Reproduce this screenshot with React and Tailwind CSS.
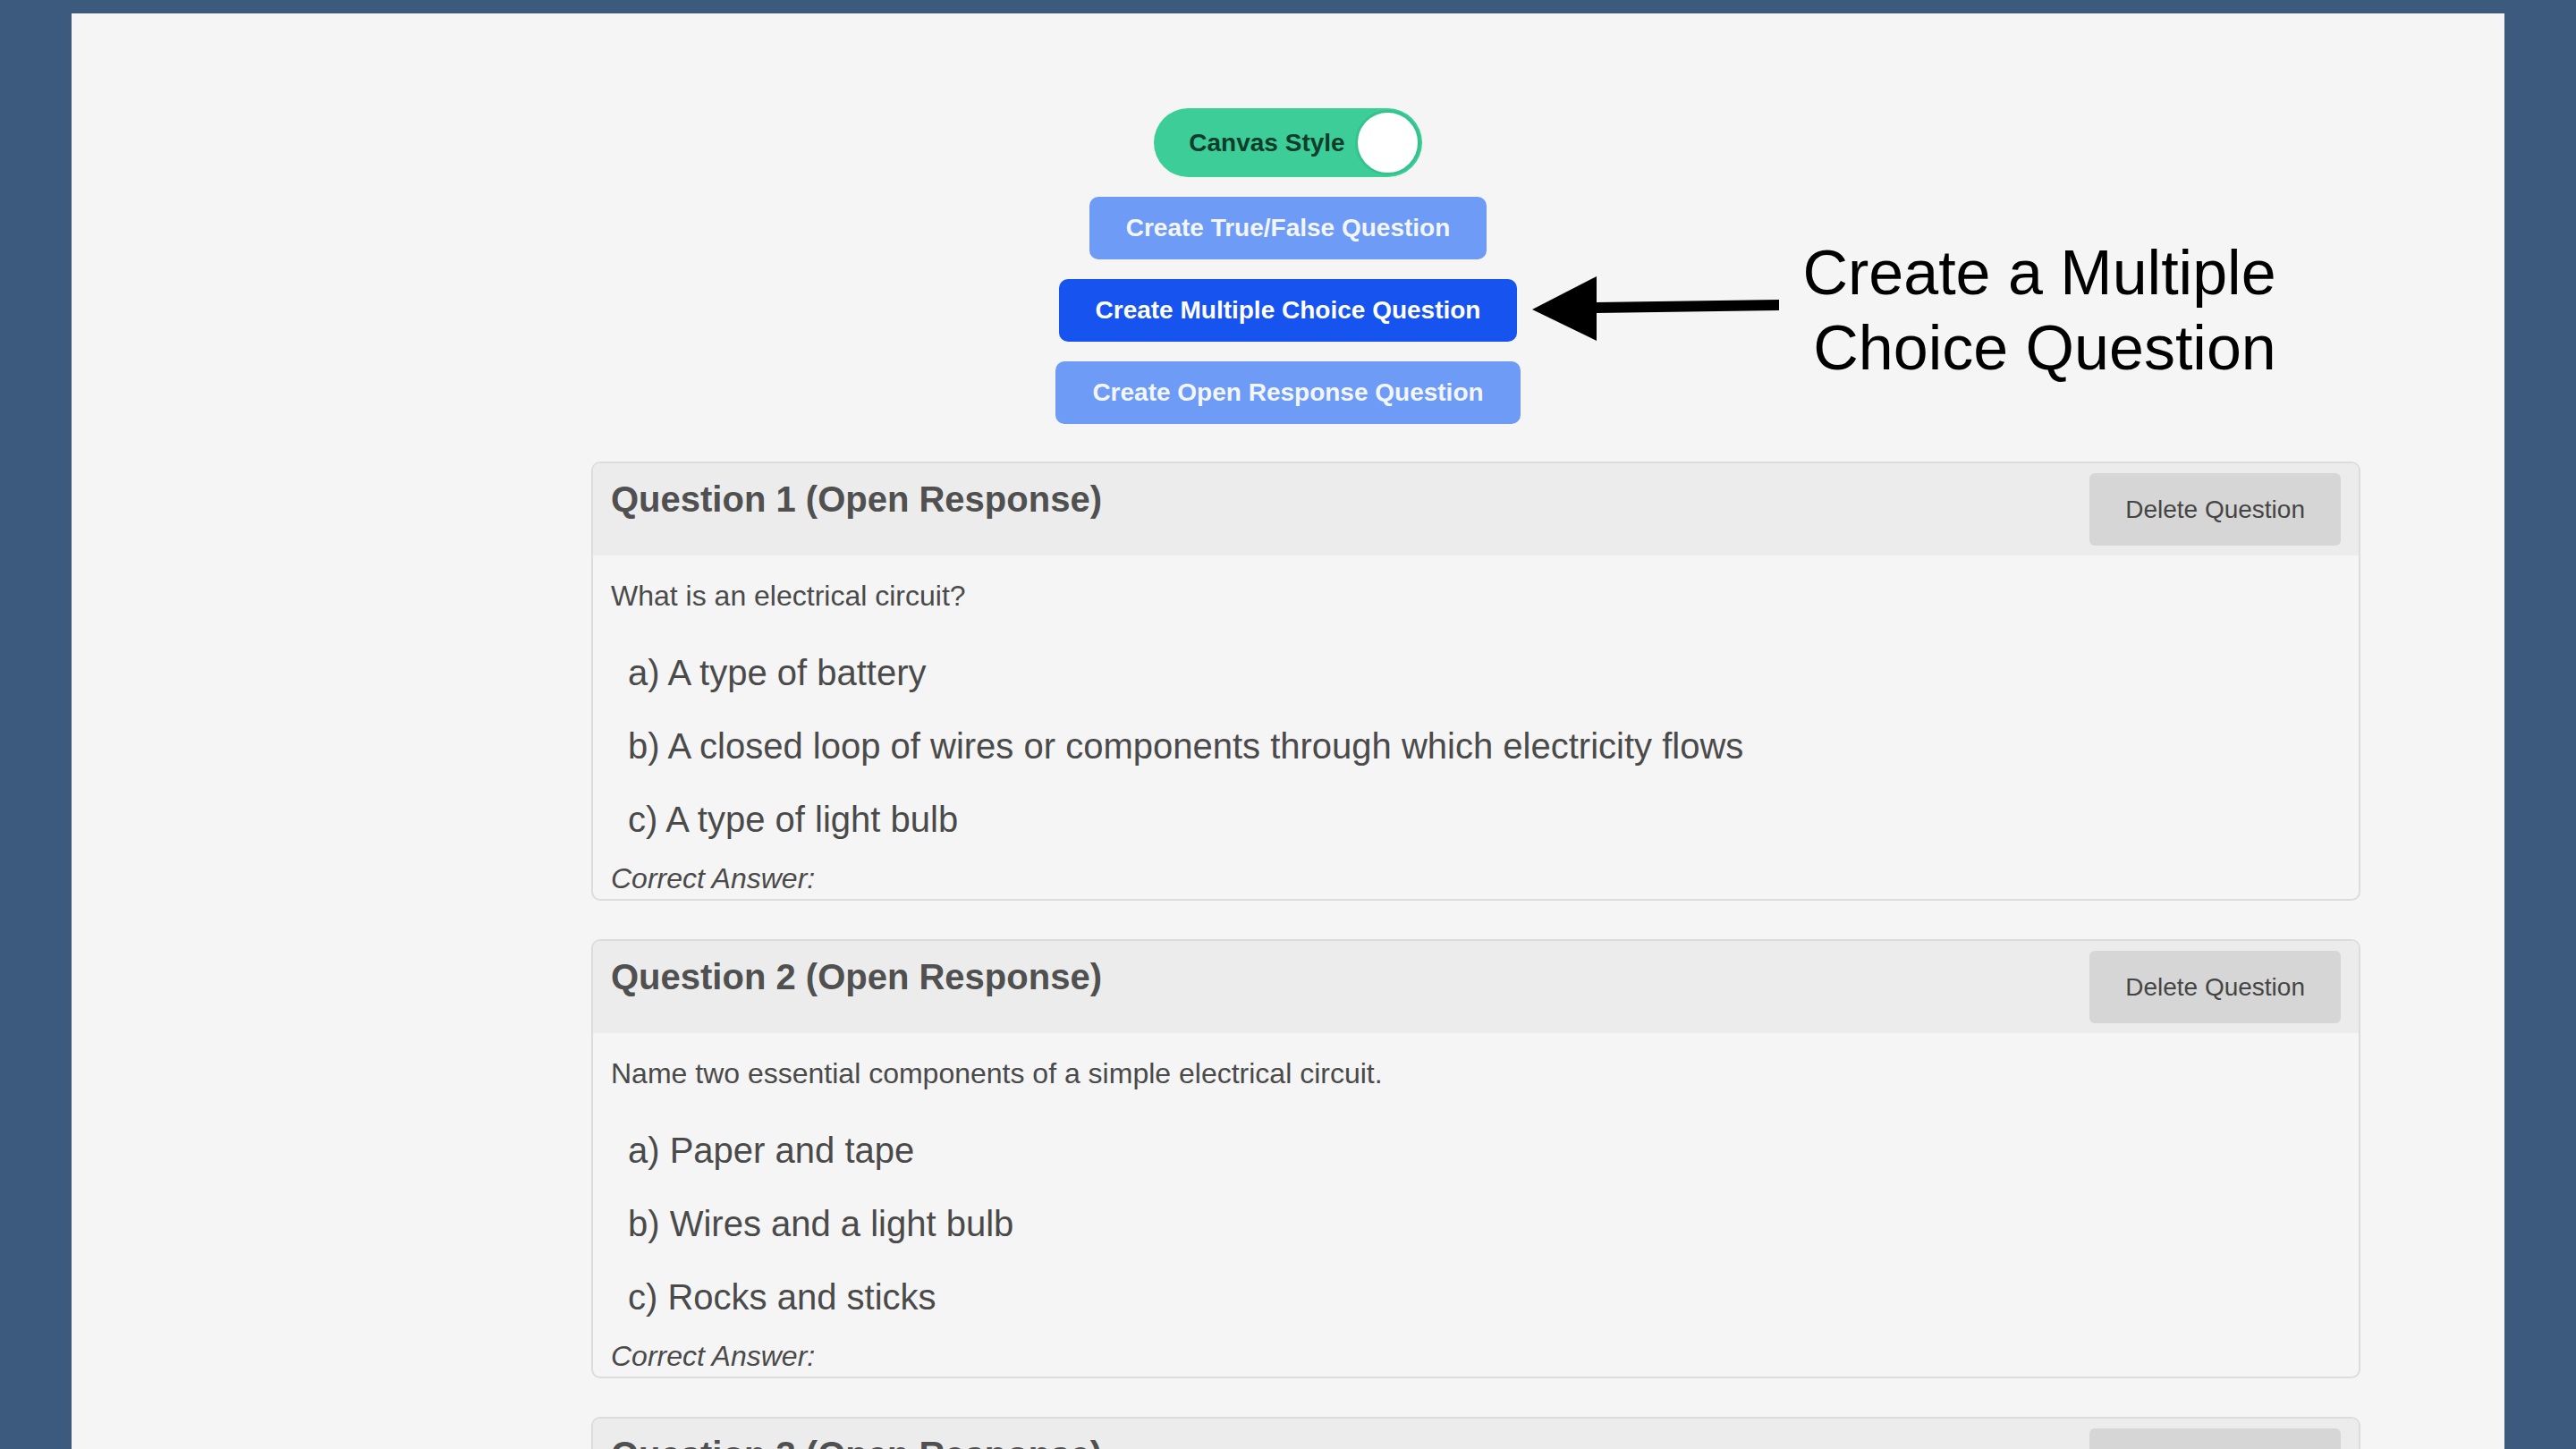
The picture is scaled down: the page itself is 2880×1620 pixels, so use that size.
import React from 'react';

const questions = [
  {
    id: 1,
    text: 'What is an electrical circuit?',
    options: [
      'a) A type of battery',
      'b) A closed loop of wires or components through which electricity flows',
      'c) A type of light bulb',
    ],
  },
  {
    id: 2,
    text: 'Name two essential components of a simple electrical circuit.',
    options: ['a) Paper and tape', 'b) Wires and a light bulb', 'c) Rocks and sticks'],
  },
  {
    id: 3,
    text: 'What is the purpose of a switch in a circuit?',
    options: ['a) To stop the battery', 'b) To open or close the circuit', 'c) To make light'],
  },
];

const QuestionCard = ({ q }) => {
  return (
    <div className="rounded-[10px] border-2 border-[#dcdcdc] bg-[#f5f5f5] overflow-hidden">
      <div className="flex items-start justify-between bg-[#ececec] px-[20px] pt-[11px] pb-[11px]">
        <h3 className="mt-[5px] text-[40px] leading-[48px] font-bold text-[#505050]">
          Question {q.id} (Open Response)
        </h3>
        <button className="h-[81px] px-[40px] rounded-[6px] bg-[#d6d6d6] text-[28px] text-[#454545]">
          Delete Question
        </button>
      </div>
      <div className="px-[20px] pt-[21px] pb-[3px] text-[#4a4a4a]">
        <p className="text-[32px] leading-[48px]">{q.text}</p>
        <ul className="mt-[21px] pl-[19px]">
          {q.options.map((opt) => (
            <li key={opt} className="text-[40px] leading-[82px]">{opt}</li>
          ))}
        </ul>
        <p className="mt-[5px] italic text-[32px] leading-[40px]">Correct Answer:</p>
      </div>
    </div>
  );
};

const App = () => {
  return (
    <div className="h-[1620px] overflow-hidden bg-[#3c5a7e] pt-[15px] px-[80px] font-['Liberation_Sans',Arial,sans-serif]">
      <div className="relative min-h-[1700px] bg-[#f5f5f5] pt-[106px]">
        {/* buttons */}
        <div className="flex flex-col items-center gap-[22px]">
          <div className="flex h-[77px] items-center rounded-full bg-[#3dcd98] pl-[39px] pr-[2px]">
            <span className="text-[28px] font-bold text-[#0e3d2b]">Canvas Style</span>
            <span className="ml-[11px] h-[73px] w-[73px] rounded-full border-[3px] border-[#36c28f] bg-white"></span>
          </div>
          <button className="h-[70px] px-[41px] rounded-[10px] bg-[#6e9bf5] text-[28px] font-bold text-[#f3f6ff]">
            Create True/False Question
          </button>
          <button className="h-[70px] px-[41px] rounded-[10px] bg-[#1753ef] text-[28px] font-bold text-white">
            Create Multiple Choice Question
          </button>
          <button className="h-[70px] px-[41px] rounded-[10px] bg-[#6e9bf5] text-[28px] font-bold text-[#f3f6ff]">
            Create Open Response Question
          </button>
        </div>

        {/* annotation */}
        <svg className="absolute left-[1630px] top-[285px]" width="280" height="90" viewBox="0 0 280 90">
          <polygon points="3,46 75,9 75,81" fill="#000" />
          <polygon points="74,38 279,35 279,47 74,50" fill="#000" />
        </svg>
        <div className="absolute left-[1900px] top-[248px] w-[600px] text-center text-[70px] leading-[84px] text-black">
          <div>Create a Multiple</div>
          <div className="pl-[12px]">Choice Question</div>
        </div>

        {/* questions */}
        <div className="mt-[42px] ml-[581px] mr-[161px] flex flex-col gap-[43px]">
          {questions.map((q) => (
            <QuestionCard key={q.id} q={q} />
          ))}
        </div>
      </div>
    </div>
  );
};

export default App;
